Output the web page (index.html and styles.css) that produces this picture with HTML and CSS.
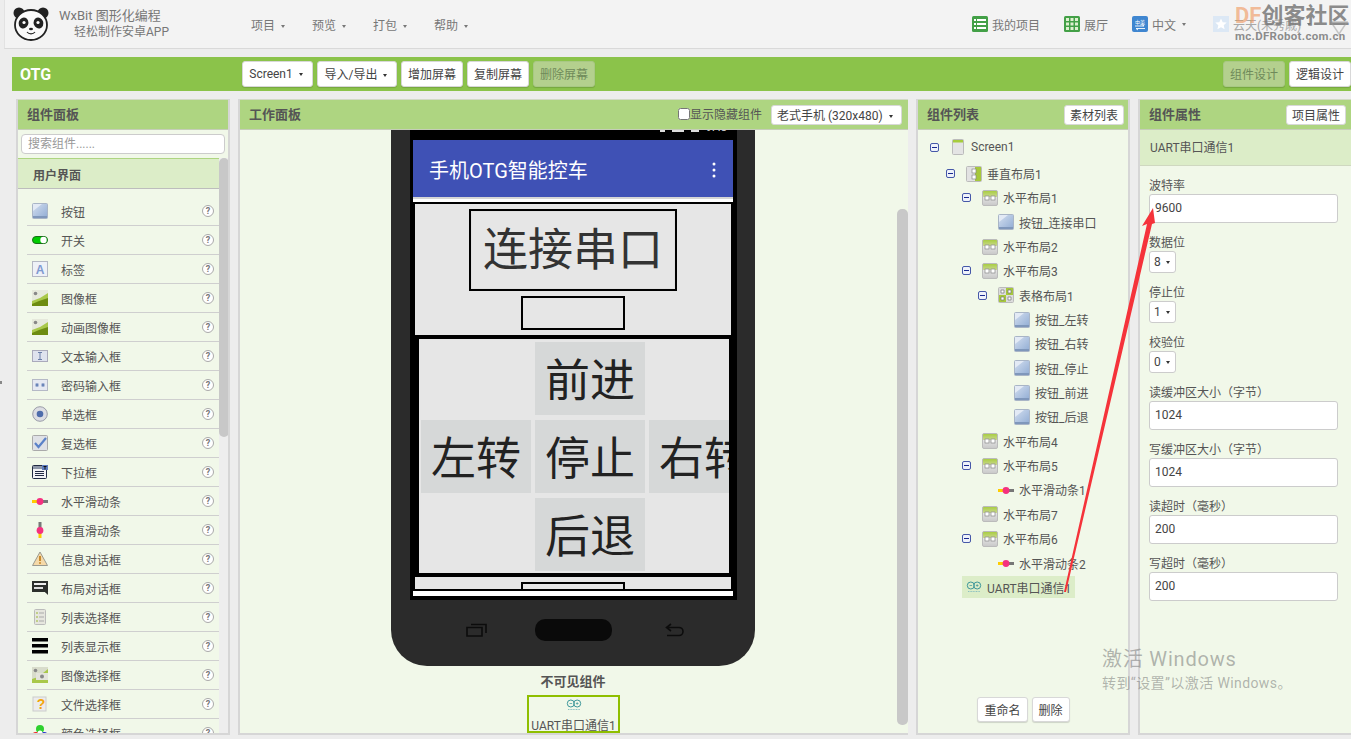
FILE: index.html
```html
<!DOCTYPE html>
<html>
<head>
    <title>WxBit 图形化编程</title>
    <meta charset="UTF-8">
    <meta name="viewport" content="width=device-width, initial-scale=1.0">
    <link rel="stylesheet" href="styles.css">
</head>
<body>
    <svg class="defs" width="0" height="0">
        <defs>
            <linearGradient id="blue" x1="0" y1="0" x2="1" y2="1"><stop offset="0" stop-color="#d5e0f0"/><stop offset="1" stop-color="#8fabd3"/></linearGradient>
            <linearGradient id="lay" x1="0" y1="0" x2="0" y2="1"><stop offset="0" stop-color="#a6cc3c"/><stop offset=".4" stop-color="#c8d88a"/><stop offset=".45" stop-color="#e4e4e4"/><stop offset="1" stop-color="#c8c8c8"/></linearGradient>
            <symbol id="i-btn" viewBox="0 0 16 16"><rect x=".5" y=".5" width="15" height="15" rx="1" fill="url(#blue)" stroke="#a9b5c6"/><path d="M1 13h14v2H1z" fill="#7f97bb"/><path d="M1 1h9L1 8z" fill="#e3eaf5"/></symbol>
            <symbol id="i-switch" viewBox="0 0 16 16"><rect x=".5" y="4.500" width="15" height="7" rx="3.500" fill="#0c0" stroke="#186d18"/><circle cx="11.500" cy="8" r="3.200" fill="#fff"/></symbol>
            <symbol id="i-label" viewBox="0 0 16 16"><rect x=".5" y=".5" width="15" height="15" fill="#eef1f7" stroke="#b4b8c4"/><text x="8" y="12.500" class="icon-letter">A</text></symbol>
            <symbol id="i-img" viewBox="0 0 16 16"><rect width="16" height="16" fill="#e6e9dc"/><circle cx="3.500" cy="3.500" r="1.800" fill="#888"/><path d="M0 11 8 8l8-5v13H0z" fill="#a9c84a"/><path d="M0 14l7-3 9-3v8H0z" fill="#6d8c10"/></symbol>
            <symbol id="i-text" viewBox="0 0 16 16"><rect x=".5" y="2.500" width="15" height="11" fill="#dfe3ee" stroke="#aab"/><path d="M6 4.500h4M6 11.500h4M8 4.500v7" stroke="#6b7fa8" fill="none"/></symbol>
            <symbol id="i-pass" viewBox="0 0 16 16"><rect x=".5" y="2.500" width="15" height="11" fill="#e6e9f2" stroke="#b5b9c6"/><path d="M3 8h4M5 6v4M4 6.500l2 3M6 6.500l-2 3M9 8h4M11 6v4M10 6.500l2 3M12 6.500l-2 3" stroke="#5c78b2" fill="none" stroke-width=".8"/></symbol>
            <symbol id="i-radio" viewBox="0 0 16 16"><circle cx="8" cy="8" r="7.300" fill="#dcdde3" stroke="#9a9ca8"/><circle cx="8" cy="8" r="3.300" fill="#4e6cab"/></symbol>
            <symbol id="i-check" viewBox="0 0 16 16"><rect x=".5" y=".5" width="15" height="15" rx="1" fill="#dfe1e6" stroke="#aaa"/><path d="M3 8l3.500 4L14 3" stroke="#5b82c8" stroke-width="2.200" fill="none"/></symbol>
            <symbol id="i-drop" viewBox="0 0 16 16"><rect x=".5" y="1.500" width="14" height="13" rx="1" fill="#f3f3f6" stroke="#222b44"/><rect x="1" y="2" width="13" height="3" fill="#8d96a8"/><rect x="10" y="1" width="6" height="5" fill="#5d7cc0"/><path d="M11.500 2.500h3M13 2.500v3" stroke="#111"/><path d="M3 7.500h9M3 9.500h9M3 11.500h9" stroke="#222b44"/></symbol>
            <symbol id="i-hslider" viewBox="0 0 16 16"><rect y="7" width="8" height="3" fill="#fc0"/><rect x="8" y="7" width="8" height="3" fill="#777"/><circle cx="8" cy="8.500" r="3.400" fill="#f5317f"/></symbol>
            <symbol id="i-vslider" viewBox="0 0 16 16"><rect x="6.500" width="3" height="8" fill="#777"/><rect x="6.500" y="8" width="3" height="8" fill="#fc0"/><circle cx="8" cy="8.500" r="3.400" fill="#f5317f"/></symbol>
            <symbol id="i-warn" viewBox="0 0 16 16"><path d="M8 1l7.500 13.500H.5z" fill="#f5d9a8" stroke="#9a9a90"/><path d="M8 5v5" stroke="#c78a2c" stroke-width="2"/><circle cx="8" cy="12" r="1" fill="#c78a2c"/></symbol>
            <symbol id="i-dialog" viewBox="0 0 16 16"><path d="M0 1h16v13l-3-2H0z" fill="#2c2f2c"/><path d="M13 12h3v3z" fill="#2c2f2c"/><rect x="2" y="3" width="12" height="2" fill="#eee"/><rect x="2" y="7" width="9" height="2" fill="#ddd"/></symbol>
            <symbol id="i-listp" viewBox="0 0 16 16"><rect x="2.500" y=".5" width="11" height="15" rx="1" fill="#e6e6de" stroke="#bbb"/><path d="M7 4h5M7 8h5M7 12h5" stroke="#aaa"/><path d="M4 4h2M4 8h2M4 12h2" stroke="#9ab833"/></symbol>
            <symbol id="i-listv" viewBox="0 0 16 16"><path d="M0 0h16v3.500H0zM0 6h16v3.500H0zM0 12h16v3.500H0z" fill="#000"/></symbol>
            <symbol id="i-imgp" viewBox="0 0 16 16"><rect width="16" height="16" fill="#d8dccb"/><circle cx="3.500" cy="3.500" r="1.800" fill="#888"/><path d="M0 12l6-2 10-8v14H0z" fill="#a9c84a"/><rect x="4" y="6" width="12" height="7" fill="#e4e4dc"/><circle cx="10" cy="9.500" r="2" fill="#888"/></symbol>
            <symbol id="i-file" viewBox="0 0 16 16"><rect x="1" y="1" width="13" height="14" fill="#ececec" stroke="#ccc"/><text x="9" y="13" class="icon-quest">?</text></symbol>
            <symbol id="i-color" viewBox="0 0 16 16"><circle cx="8" cy="4" r="4" fill="#2ed12e"/><circle cx="4" cy="11" r="4" fill="#e22"/><circle cx="12" cy="11" r="4" fill="#23c"/><circle cx="8" cy="8" r="2.500" fill="#fff"/></symbol>
            <symbol id="i-screen" viewBox="0 0 16 16"><rect x="2.500" y=".5" width="11" height="15" rx="1" fill="#e4e4e4" stroke="#bbb"/><rect x="3" y="1" width="10" height="2.500" fill="#a6cc3c"/></symbol>
            <symbol id="i-vlay" viewBox="0 0 16 16"><rect x=".5" y=".5" width="15" height="15" rx="1" fill="#e2e2e2" stroke="#bbb"/><rect x="9" y="1" width="6" height="14" fill="#a6c83c"/><rect x="6" y="3" width="4" height="4" fill="#fff" stroke="#888" stroke-width=".7"/><rect x="6" y="9" width="4" height="4" fill="#fff" stroke="#888" stroke-width=".7"/></symbol>
            <symbol id="i-hlay" viewBox="0 0 16 16"><rect x=".5" y=".5" width="15" height="15" rx="1.500" fill="url(#lay)" stroke="#bbb"/><rect x="3" y="6" width="4" height="4" fill="#fff" stroke="#888" stroke-width=".7"/><rect x="9" y="6" width="4" height="4" fill="#fff" stroke="#888" stroke-width=".7"/></symbol>
            <symbol id="i-table" viewBox="0 0 16 16"><rect x=".5" y=".5" width="15" height="15" rx="1" fill="#dcdcdc" stroke="#bbb"/><rect x="8" y="1" width="7" height="7" fill="#a6c83c"/><rect x="1" y="8" width="7" height="7" fill="#a6c83c"/><path d="M3 3h3v3H3zM10 3h3v3h-3zM3 10h3v3H3zM10 10h3v3h-3z" fill="#fff" stroke="#777" stroke-width=".7"/></symbol>
            <symbol id="i-uart" viewBox="0 0 16 16"><circle cx="4.800" cy="6.500" r="3.500" fill="none" stroke="#3d979a" stroke-width="1"/><circle cx="11.200" cy="6.500" r="3.500" fill="none" stroke="#3d979a" stroke-width="1"/><path d="M3.500 6.500h2.600M9.900 6.500h2.600M11.200 5.200v2.600" stroke="#3d979a" stroke-width=".7"/><path d="M2 12.500h12" stroke="#8cc0c1" stroke-dasharray="1 .6" stroke-width="1.200"/></symbol>
            <symbol id="i-minus" viewBox="0 0 9 9"><rect x=".5" y=".5" width="8" height="8" rx="1.500" fill="#eef2fa" stroke="#4658a8"/><path d="M2 4.500h5" stroke="#1a2a90"/></symbol>
        </defs>
    </svg>

    <!-- 顶部导航 -->
    <header class="navbar">
        <svg class="logo" viewBox="0 0 36 36">
            <circle cx="6" cy="7" r="5.500" fill="#222"/>
            <circle cx="30" cy="7" r="5.500" fill="#222"/>
            <ellipse cx="18" cy="19" rx="16" ry="15" fill="#fafafa" stroke="#222" stroke-width="1.800"/>
            <ellipse cx="10.500" cy="17" rx="4.800" ry="5.500" fill="#222" transform="rotate(20 10.500 17)"/>
            <ellipse cx="25.500" cy="17" rx="4.800" ry="5.500" fill="#222" transform="rotate(-20 25.500 17)"/>
            <circle cx="11" cy="16.500" r="1.600" fill="#fff"/>
            <circle cx="25" cy="16.500" r="1.600" fill="#fff"/>
            <ellipse cx="18" cy="23" rx="2" ry="1.300" fill="#222"/>
            <path d="M14 26c2 2.500 6 2.500 8 0" fill="none" stroke="#222" stroke-width="1.200"/>
        </svg>
        <div class="brand">
            <div class="brand-name">WxBit 图形化编程</div>
            <div class="brand-sub">轻松制作安卓APP</div>
        </div>
        <nav class="menu">
            <a>项目<i class="caret"></i></a>
            <a>预览<i class="caret"></i></a>
            <a>打包<i class="caret"></i></a>
            <a>帮助<i class="caret"></i></a>
        </nav>
        <nav class="menu-right">
            <a class="link-projects">
                <svg class="nav-icon" viewBox="0 0 16 16"><rect width="16" height="16" rx="1.500" fill="#43a047"/><path d="M2 3h2v2H2zM5 3h9v2H5zM2 7h2v2H2zM5 7h9v2H5zM2 11h2v2H2zM5 11h9v2H5z" fill="#fff"/></svg>
                我的项目
            </a>
            <a class="link-gallery">
                <svg class="nav-icon" viewBox="0 0 16 16"><rect width="16" height="16" rx="1.500" fill="#43a047"/><path d="M2 2h3v3H2zM6.500 2h3v3h-3zM11 2h3v3h-3zM2 6.500h3v3H2zM6.500 6.500h3v3h-3zM11 6.500h3v3h-3zM2 11h3v3H2zM6.500 11h3v3h-3zM11 11h3v3h-3z" fill="#dff0d0"/></svg>
                展厅
            </a>
            <a class="link-lang">
                <svg class="nav-icon" viewBox="0 0 16 16"><rect width="16" height="16" rx="2" fill="#3f86d0"/><text x="8" y="7.500" class="lang-glyph">中英</text><path d="M3 10h9l-2-1.500M13 12.500H4l2 1.500" stroke="#fff" fill="none" stroke-width=".9"/></svg>
                中文<i class="caret"></i>
            </a>
            <a class="link-user">
                <svg class="nav-icon" viewBox="0 0 16 16"><rect width="16" height="16" fill="#dce8f5"/><path d="M8 2.500l1.700 3.700 4 .4-3 2.700.9 4L8 11.300l-3.600 2 .9-4-3-2.700 4-.4z" fill="#fff"/></svg>
                云天(未秀戚)<i class="caret"></i>
            </a>
        </nav>
    </header>

    <!-- 工具条 -->
    <div class="toolbar">
        <span class="project-name">OTG</span>
        <div class="tool-group">
            <button class="btn btn-tool btn-screen">Screen1<i class="caret caret-dark"></i></button>
            <button class="btn btn-tool btn-import">导入/导出<i class="caret caret-dark"></i></button>
            <button class="btn btn-tool">增加屏幕</button>
            <button class="btn btn-tool">复制屏幕</button>
            <button class="btn btn-tool btn-off">删除屏幕</button>
        </div>
        <div class="tool-group tool-right">
            <button class="btn btn-tool btn-off">组件设计</button>
            <button class="btn btn-tool">逻辑设计</button>
        </div>
    </div>

    <main class="panels">
        <!-- 组件面板 -->
        <section class="panel panel-palette">
            <div class="panel-head"><h2>组件面板</h2></div>
            <div class="search-wrap"><input class="search" type="text" placeholder="搜索组件......"></div>
            <div class="palette-body">
                <div class="palette-list">
                    <h3 class="category">用户界面</h3>
                    <ul class="items">
                        <li><svg class="ico"><use href="#i-btn"/></svg><span>按钮</span><b class="help">?</b></li>
                        <li><svg class="ico"><use href="#i-switch"/></svg><span>开关</span><b class="help">?</b></li>
                        <li><svg class="ico"><use href="#i-label"/></svg><span>标签</span><b class="help">?</b></li>
                        <li><svg class="ico"><use href="#i-img"/></svg><span>图像框</span><b class="help">?</b></li>
                        <li><svg class="ico"><use href="#i-img"/></svg><span>动画图像框</span><b class="help">?</b></li>
                        <li><svg class="ico"><use href="#i-text"/></svg><span>文本输入框</span><b class="help">?</b></li>
                        <li><svg class="ico"><use href="#i-pass"/></svg><span>密码输入框</span><b class="help">?</b></li>
                        <li><svg class="ico"><use href="#i-radio"/></svg><span>单选框</span><b class="help">?</b></li>
                        <li><svg class="ico"><use href="#i-check"/></svg><span>复选框</span><b class="help">?</b></li>
                        <li><svg class="ico"><use href="#i-drop"/></svg><span>下拉框</span><b class="help">?</b></li>
                        <li><svg class="ico"><use href="#i-hslider"/></svg><span>水平滑动条</span><b class="help">?</b></li>
                        <li><svg class="ico"><use href="#i-vslider"/></svg><span>垂直滑动条</span><b class="help">?</b></li>
                        <li><svg class="ico"><use href="#i-warn"/></svg><span>信息对话框</span><b class="help">?</b></li>
                        <li><svg class="ico"><use href="#i-dialog"/></svg><span>布局对话框</span><b class="help">?</b></li>
                        <li><svg class="ico"><use href="#i-listp"/></svg><span>列表选择框</span><b class="help">?</b></li>
                        <li><svg class="ico"><use href="#i-listv"/></svg><span>列表显示框</span><b class="help">?</b></li>
                        <li><svg class="ico"><use href="#i-imgp"/></svg><span>图像选择框</span><b class="help">?</b></li>
                        <li><svg class="ico"><use href="#i-file"/></svg><span>文件选择框</span><b class="help">?</b></li>
                        <li><svg class="ico"><use href="#i-color"/></svg><span>颜色选择框</span><b class="help">?</b></li>
                    </ul>
                </div>
                <div class="scroll-track"><div class="scroll-thumb"></div></div>
            </div>
        </section>

        <!-- 工作面板 -->
        <section class="panel panel-work">
            <div class="panel-head">
                <h2>工作面板</h2>
                <label class="show-hidden"><input type="checkbox">显示隐藏组件</label>
                <button class="btn btn-head btn-size">老式手机 (320x480)<i class="caret caret-dark"></i></button>
            </div>
            <div class="work-body">
                <div class="phone">
                    <div class="screen">
                        <div class="status-bar">
                            <span class="status-icons"><i class="st-wifi"></i><i class="st-signal"></i><i class="st-battery"></i></span>
                            <span class="status-time">9:48</span>
                        </div>
                        <div class="app-bar">
                            <span>手机OTG智能控车</span>
                            <svg class="app-more" viewBox="0 0 4 16"><circle cx="2" cy="2" r="1.500"/><circle cx="2" cy="8" r="1.500"/><circle cx="2" cy="14" r="1.500"/></svg>
                        </div>
                        <div class="app-gap"></div>
                        <div class="layout-top">
                            <div class="big-btn">连接串口</div>
                            <div class="small-box"></div>
                        </div>
                        <div class="layout-table">
                            <div></div>
                            <div class="cell">前进</div>
                            <div></div>
                            <div class="cell">左转</div>
                            <div class="cell">停止</div>
                            <div class="cell">右转</div>
                            <div></div>
                            <div class="cell">后退</div>
                            <div></div>
                        </div>
                        <div class="layout-bottom"><div class="small-box"></div></div>
                        <div class="screen-foot"></div>
                    </div>
                    <div class="phone-keys">
                        <svg class="key" viewBox="0 0 21 14"><path d="M1 4.500h15v8.500H1zM5 1.500h15v8.500" fill="none" stroke="#0c0c0c" stroke-width="1.600"/></svg>
                        <div class="key-home"></div>
                        <svg class="key key-back" viewBox="0 0 21 14"><path d="M7 1L2.500 4.500 7 8M3 4.500h12a4 4 0 0 1 0 8H3" fill="none" stroke="#0c0c0c" stroke-width="1.600"/></svg>
                    </div>
                </div>
                <div class="hidden-title">不可见组件</div>
                <div class="hidden-comp">
                    <svg class="ico-sm"><use href="#i-uart"/></svg>
                    <div>UART串口通信1</div>
                </div>
                <div class="work-thumb"></div>
            </div>
        </section>

        <!-- 组件列表 -->
        <section class="panel panel-tree">
            <div class="panel-head">
                <h2>组件列表</h2>
                <button class="btn btn-head">素材列表</button>
            </div>
            <div class="tree">
                <div class="node lv0"><svg class="tog"><use href="#i-minus"/></svg><svg class="ico"><use href="#i-screen"/></svg><span>Screen1</span></div>
                <div class="node lv1"><svg class="tog"><use href="#i-minus"/></svg><svg class="ico"><use href="#i-vlay"/></svg><span>垂直布局1</span></div>
                <div class="node lv2"><svg class="tog"><use href="#i-minus"/></svg><svg class="ico"><use href="#i-hlay"/></svg><span>水平布局1</span></div>
                <div class="node lv3"><i class="tog"></i><svg class="ico"><use href="#i-btn"/></svg><span>按钮_连接串口</span></div>
                <div class="node lv2"><i class="tog"></i><svg class="ico"><use href="#i-hlay"/></svg><span>水平布局2</span></div>
                <div class="node lv2"><svg class="tog"><use href="#i-minus"/></svg><svg class="ico"><use href="#i-hlay"/></svg><span>水平布局3</span></div>
                <div class="node lv3"><svg class="tog"><use href="#i-minus"/></svg><svg class="ico"><use href="#i-table"/></svg><span>表格布局1</span></div>
                <div class="node lv4"><i class="tog"></i><svg class="ico"><use href="#i-btn"/></svg><span>按钮_左转</span></div>
                <div class="node lv4"><i class="tog"></i><svg class="ico"><use href="#i-btn"/></svg><span>按钮_右转</span></div>
                <div class="node lv4"><i class="tog"></i><svg class="ico"><use href="#i-btn"/></svg><span>按钮_停止</span></div>
                <div class="node lv4"><i class="tog"></i><svg class="ico"><use href="#i-btn"/></svg><span>按钮_前进</span></div>
                <div class="node lv4"><i class="tog"></i><svg class="ico"><use href="#i-btn"/></svg><span>按钮_后退</span></div>
                <div class="node lv2"><i class="tog"></i><svg class="ico"><use href="#i-hlay"/></svg><span>水平布局4</span></div>
                <div class="node lv2"><svg class="tog"><use href="#i-minus"/></svg><svg class="ico"><use href="#i-hlay"/></svg><span>水平布局5</span></div>
                <div class="node lv3"><i class="tog"></i><svg class="ico"><use href="#i-hslider"/></svg><span>水平滑动条1</span></div>
                <div class="node lv2"><i class="tog"></i><svg class="ico"><use href="#i-hlay"/></svg><span>水平布局7</span></div>
                <div class="node lv2"><svg class="tog"><use href="#i-minus"/></svg><svg class="ico"><use href="#i-hlay"/></svg><span>水平布局6</span></div>
                <div class="node lv3"><i class="tog"></i><svg class="ico"><use href="#i-hslider"/></svg><span>水平滑动条2</span></div>
                <div class="node lv1 node-sel"><i class="tog"></i><div class="sel-wrap"><svg class="ico"><use href="#i-uart"/></svg><span>UART串口通信1</span></div></div>
            </div>
            <div class="tree-actions">
                <button class="btn btn-action">重命名</button>
                <button class="btn btn-action">删除</button>
            </div>
        </section>

        <!-- 组件属性 -->
        <section class="panel panel-props">
            <div class="panel-head">
                <h2>组件属性</h2>
                <button class="btn btn-head">项目属性</button>
            </div>
            <div class="props-title">UART串口通信1</div>
            <div class="props">
                <div class="prop"><label>波特率</label><div class="field">9600</div></div>
                <div class="prop"><label>数据位</label><div class="pick">8<i class="caret caret-dark"></i></div></div>
                <div class="prop"><label>停止位</label><div class="pick">1<i class="caret caret-dark"></i></div></div>
                <div class="prop"><label>校验位</label><div class="pick">0<i class="caret caret-dark"></i></div></div>
                <div class="prop"><label>读缓冲区大小（字节）</label><div class="field">1024</div></div>
                <div class="prop"><label>写缓冲区大小（字节）</label><div class="field">1024</div></div>
                <div class="prop"><label>读超时（毫秒）</label><div class="field">200</div></div>
                <div class="prop"><label>写超时（毫秒）</label><div class="field">200</div></div>
            </div>
        </section>
    </main>

    <!-- 截图上的标注和水印 -->
    <i class="edge-dot"></i>
    <svg class="arrow" viewBox="0 0 1351 739">
        <path d="M1064 592 1147 224 1142 226 1153 208 1155 223 1152 224 1066 592z" fill="#f5333a"/>
    </svg>
    <div class="watermark">
        <div class="wm-title"><span>DF</span>创客社区</div>
        <div class="wm-url">mc.DFRobot.com.cn</div>
        <svg class="wm-mark" viewBox="0 0 18 14"><path d="M1 1h16L9 13z" fill="none" stroke="#999" stroke-width="1.500"/></svg>
    </div>
    <div class="activate">
        <div class="activate-big">激活 Windows</div>
        <div>转到“设置”以激活 Windows。</div>
    </div>
</body>
</html>
```

FILE: styles.css
```css
* {
    margin: 0;
    padding: 0;
    box-sizing: border-box;
}

body {
    width: 1351px;
    height: 739px;
    overflow: hidden;
    background: #ededed;
    color: #555;
    font-family: Roboto, "Noto Sans CJK SC", sans-serif;
    font-size: 12px;
}

.defs {
    position: absolute;
}

.icon-letter {
    font: bold 12px "Liberation Sans", sans-serif;
    fill: #7f9ad0;
    text-anchor: middle;
}

.icon-quest {
    font: bold 14px "Liberation Sans", sans-serif;
    fill: #f2a60c;
    text-anchor: middle;
}

.lang-glyph {
    font: 5px "Noto Sans CJK SC", sans-serif;
    fill: #fff;
    text-anchor: middle;
}

.caret {
    display: inline-block;
    width: 0;
    height: 0;
    margin-left: 6px;
    vertical-align: middle;
    border-top: 3px solid #777;
    border-left: 2.500px solid transparent;
    border-right: 2.500px solid transparent;
}

.caret-dark {
    border-top-color: #333;
}

/* 顶部导航 */
.navbar {
    display: flex;
    align-items: center;
    height: 49px;
    margin-left: 4px;
    padding-left: 9px;
    background: #f3f3f3;
    border-left: 1px solid #e2e2e2;
    border-bottom: 1px solid #d9d9d9;
    color: #777;
}

.logo {
    width: 36px;
    height: 36px;
    margin-left: -1px;
    flex: none;
}

.brand {
    width: 192px;
    margin-left: 10px;
    color: #777;
}

.brand-name {
    font-size: 13px;
    line-height: 17px;
}

.brand-sub {
    margin-left: 15px;
    line-height: 17px;
}

.menu {
    display: flex;
    gap: 26px;
}

.menu a {
    width: 35px;
    white-space: nowrap;
}

.menu-right {
    display: flex;
    align-items: center;
    margin-left: auto;
    white-space: nowrap;
    font-size: 12px;
}

.menu-right a {
    display: flex;
    align-items: center;
    gap: 4px;
}

.menu-right .caret {
    margin-left: 2px;
}

.nav-icon {
    width: 16px;
    height: 16px;
}

.link-projects {
    width: 92px;
}

.link-gallery {
    width: 68px;
}

.link-lang {
    width: 81px;
}

.link-user {
    width: 138px;
    color: #a8a8a8;
}

/* 工具条 */
.toolbar {
    display: flex;
    align-items: center;
    height: 34px;
    margin: 8px 0 8px 12px;
    background: #8bc34a;
}

.project-name {
    width: 230px;
    padding-left: 8px;
    color: #fff;
    font-size: 16px;
    font-weight: 700;
}

.tool-group {
    display: flex;
    gap: 4px;
}

.tool-right {
    margin-left: auto;
}

.btn {
    background: #fff;
    border: 1px solid #d8d8d8;
    border-radius: 3px;
    color: #444;
    font-family: inherit;
    font-size: 12px;
    white-space: nowrap;
}

.btn-tool {
    height: 26px;
    padding: 0 6px 1px;
    box-shadow: 0 1px 1px rgba(0, 0, 0, 0.15);
}

.btn-screen {
    width: 71px;
    padding-right: 9px;
}

.btn-import {
    width: 80px;
    padding-right: 8px;
}

.btn-off {
    background: #b4d08e;
    border-color: #a8c884;
    color: #6f8a5a;
}

.btn-head {
    height: 20px;
    padding: 0 5px;
}

.btn-action {
    height: 25px;
    padding: 0 6px;
    box-shadow: 0 1px 1px rgba(0, 0, 0, 0.15);
}

/* 面板 */
.panels {
    display: flex;
    gap: 8px;
    height: 636px;
    margin-left: 16px;
}

.panel {
    display: flex;
    flex-direction: column;
    flex: none;
    background: #f1f8e9;
    border: 2px solid #d6d6d6;
    border-top: 0;
    overflow: hidden;
    position: relative;
}

.panel-palette,
.panel-tree {
    width: 214px;
}

.panel-work {
    width: 670px;
    border-right: 0;
}

.panel-props {
    width: 215px;
}

.panel-head {
    display: flex;
    align-items: center;
    justify-content: space-between;
    flex: none;
    height: 31px;
    padding: 0 3px 2px 9px;
    background: #aed581;
    border-bottom: 1px solid #c5cdb8;
    border-top: 1px solid #d2dac6;
}

.panel-tree .panel-head {
    padding-right: 4px;
}

.panel-props .panel-head {
    padding-right: 5px;
}

.panel-head h2 {
    font-size: 13px;
    font-weight: 700;
    color: #555;
}

.panel-head .btn {
    margin-top: 2px;
}

/* 组件面板 */
.search-wrap {
    flex: none;
    padding: 4px 3px;
}

.search {
    display: block;
    width: 204px;
    height: 20px;
    padding: 0 6px;
    border: 1px solid #ccc;
    border-radius: 4px;
    font-family: inherit;
    font-size: 12px;
}

.search::placeholder {
    color: #999;
}

.palette-body {
    display: flex;
    flex: 1;
    min-height: 0;
}

.palette-list {
    width: 201px;
    flex: none;
    overflow: hidden;
}

.category {
    height: 31px;
    padding-left: 15px;
    background: #dcedc8;
    border-top: 1px solid #aed581;
    border-bottom: 1px solid #bdbdbd;
    font-size: 12px;
    line-height: 35px;
    color: #555;
}

.items {
    list-style: none;
    padding: 8px 0 0 9px;
}

.items li {
    display: flex;
    align-items: center;
    height: 29px;
    padding-left: 5px;
    border-bottom: 1px solid #cfcfcf;
}

.ico {
    width: 16px;
    height: 16px;
    flex: none;
}

.items span {
    flex: 1;
    margin-left: 13px;
}

.help {
    width: 12px;
    height: 12px;
    margin-right: 5px;
    border: 1px solid #aaa;
    border-radius: 50%;
    background: #fff;
    color: #777;
    font-size: 9px;
    line-height: 10px;
    text-align: center;
}

.scroll-track {
    flex: 1;
    background: #eee;
}

.scroll-thumb {
    width: 10px;
    height: 279px;
    background: #c8c8c8;
    border-radius: 5px;
}

/* 工作面板 */
.btn-size {
    width: 131px;
    margin-right: 3px;
    padding-right: 9px;
}

.show-hidden {
    display: flex;
    align-items: center;
    margin-left: auto;
    margin-right: 9px;
    color: #555;
}

.show-hidden input {
    width: 12px;
    height: 12px;
}

.work-body {
    flex: 1;
    min-height: 0;
    position: relative;
    overflow: hidden;
}

.phone {
    width: 364px;
    margin-left: 151px;
    background: #2b2b2b;
    border-radius: 0 0 36px 36px;
}

.screen {
    width: 327px;
    margin-left: 19px;
    padding: 0 4px 4px 3px;
    background: #000;
}

.status-bar {
    display: flex;
    justify-content: flex-end;
    height: 10px;
    overflow: hidden;
    color: #ddd;
    font-size: 11px;
    line-height: 2px;
    padding-right: 6px;
}

.status-icons {
    display: flex;
    gap: 7px;
    margin-right: 7px;
}

.status-icons i {
    display: block;
    height: 2px;
    background: #ddd;
}

.st-wifi {
    width: 5px;
}

.st-signal {
    width: 12px;
}

.st-battery {
    width: 8px;
}

.status-time {
    margin-top: -3px;
}

.app-bar {
    display: flex;
    align-items: center;
    justify-content: space-between;
    height: 57px;
    padding: 2px 17px 0 16px;
    background: #3f51b5;
    color: #fff;
    font-size: 20px;
}

.app-more {
    width: 4px;
    height: 16px;
    fill: #fff;
}

.app-gap {
    height: 5px;
    background: #fff;
    border-top: 2px solid #d5d5d5;
}

.layout-top {
    display: flex;
    flex-direction: column;
    align-items: center;
    height: 131px;
    margin: 2px 2px 4px;
    padding-top: 5px;
    background: #e6e6e6;
}

.big-btn {
    width: 208px;
    height: 82px;
    border: 2px solid #000;
    box-shadow: inset 0 0 0 1px #e0e0e0;
    color: #333;
    font-size: 45px;
    line-height: 80px;
    text-align: center;
}

.small-box {
    flex: none;
    width: 104px;
    height: 34px;
    margin-top: 5px;
    border: 2px solid #000;
}

.layout-table {
    display: grid;
    grid-template-columns: 110px 110px 110px;
    grid-template-rows: 73px 73px 73px;
    column-gap: 4px;
    row-gap: 5px;
    height: 234px;
    margin: 0 4px 4px 6px;
    padding: 3px 0 0 2px;
    background: #e6e6e6;
    overflow: hidden;
}

.cell {
    background: #d6d8d8;
    color: #222;
    font-size: 45px;
    line-height: 79px;
    text-align: center;
    white-space: nowrap;
}

.layout-bottom {
    display: flex;
    justify-content: center;
    height: 12px;
    margin: 0 2px 2px;
    background: #e6e6e6;
    overflow: hidden;
}

.layout-bottom .small-box {
    margin-top: 5px;
}

.screen-foot {
    height: 5px;
    background: #fff;
}

.phone-keys {
    display: flex;
    align-items: center;
    gap: 48px;
    height: 66px;
    padding: 0 0 6px 75px;
}

.key {
    width: 21px;
    height: 14px;
}

.key-back {
    margin-left: 4px;
}

.key-home {
    width: 77px;
    height: 22px;
    background: #0a0a0a;
    border-radius: 10px;
}

.hidden-title {
    margin-top: 8px;
    padding-right: 2px;
    text-align: center;
    font-size: 13px;
    font-weight: 700;
    line-height: 16px;
}

.hidden-comp {
    width: 93px;
    height: 38px;
    margin: 5px 0 0 287px;
    border: 2px solid #8fbf00;
    text-align: center;
    line-height: 14px;
    white-space: nowrap;
}

.ico-sm {
    display: block;
    width: 16px;
    height: 16px;
    margin: 0 auto 6px;
}

.work-thumb {
    position: absolute;
    top: 79px;
    right: 0;
    width: 11px;
    height: 516px;
    background: #c8c8c8;
    border-radius: 5px;
}

/* 组件列表 */
.tree {
    flex: 1;
    padding-top: 5px;
    overflow: hidden;
}

.node {
    display: flex;
    align-items: center;
    height: 24.350px;
    white-space: nowrap;
}

.lv0 { padding-left: 12px; margin-bottom: 2px; }
.lv1 { padding-left: 28px; }
.lv2 { padding-left: 44px; }
.lv3 { padding-left: 60px; }
.lv4 { padding-left: 76px; }

.tog {
    display: block;
    flex: none;
    width: 9px;
    height: 9px;
    margin-right: 11px;
}

.node span {
    margin-left: 5px;
}

.sel-wrap {
    display: flex;
    align-items: center;
    height: 22px;
    width: 113px;
    margin-left: -4px;
    padding-left: 4px;
    background: #dcedc8;
}

.tree-actions {
    display: flex;
    justify-content: center;
    gap: 4px;
    padding: 0 0 11px 1px;
    flex: none;
}

/* 组件属性 */
.props-title {
    flex: none;
    height: 36px;
    padding-left: 10px;
    background: #dcedc8;
    border-bottom: 1px solid #cfd8c0;
    line-height: 36px;
}

.props {
    padding: 12px 0 0 9px;
}

.prop label {
    display: block;
    height: 16px;
    padding-left: 0;
    line-height: 16px;
}

.prop {
    margin-bottom: 12px;
}

.field {
    width: 189px;
    height: 29px;
    padding-left: 5px;
    background: #fff;
    border: 1px solid #ccc;
    border-radius: 3px;
    line-height: 27px;
    color: #444;
}

.pick {
    width: 27px;
    height: 22px;
    padding-left: 4px;
    background: #fff;
    border: 1px solid #ccc;
    border-radius: 3px;
    line-height: 20px;
    color: #444;
    white-space: nowrap;
}

.pick .caret {
    margin-left: 5px;
}

/* 标注和水印 */
.edge-dot {
    position: absolute;
    top: 381px;
    left: 0;
    width: 2px;
    height: 3px;
    background: #888;
}

.arrow {
    position: absolute;
    top: 0;
    left: 0;
    width: 1351px;
    height: 739px;
    pointer-events: none;
}

.watermark {
    position: absolute;
    top: 3px;
    left: 1235px;
    color: rgba(120, 120, 120, 0.85);
    font-weight: 700;
    white-space: nowrap;
}

.wm-title {
    font-size: 22px;
    line-height: 26px;
}

.wm-title span {
    color: rgba(240, 150, 90, 0.6);
}

.wm-url {
    font-size: 11.500px;
    line-height: 14px;
    letter-spacing: 0.300px;
}

.wm-mark {
    position: absolute;
    top: 18px;
    left: 95px;
    width: 18px;
    height: 14px;
    opacity: 0.5;
}

.activate {
    position: absolute;
    top: 647px;
    left: 1102px;
    color: rgba(120, 120, 120, 0.55);
    font-size: 14px;
    letter-spacing: 0.400px;
    white-space: nowrap;
}

.activate-big {
    font-size: 20px;
    letter-spacing: 0.800px;
    line-height: 25px;
}
```
